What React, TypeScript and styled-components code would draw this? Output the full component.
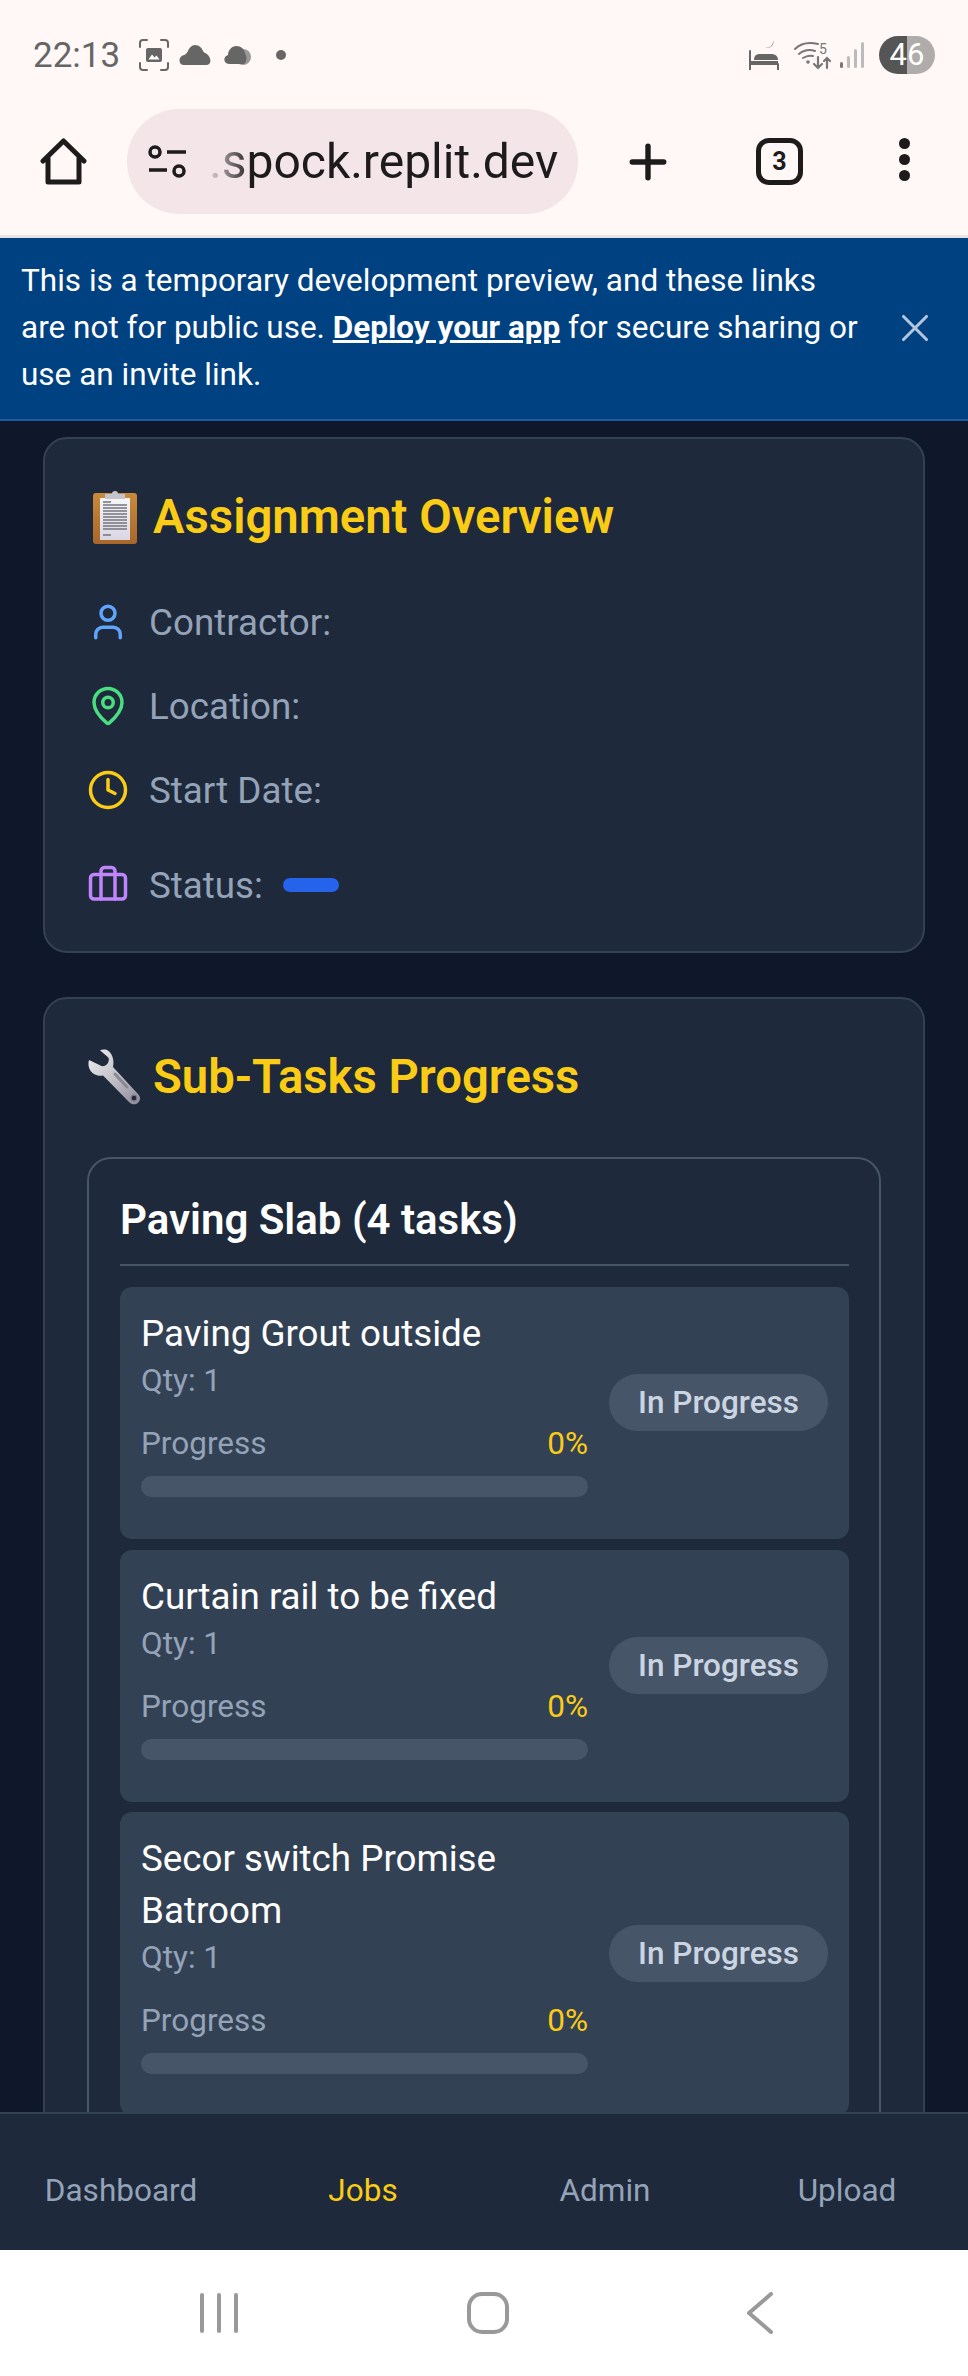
import React from 'react';
import styled, { createGlobalStyle } from 'styled-components';
import { User, MapPin, Clock, Briefcase, X, Plus } from 'lucide-react';

const Global = createGlobalStyle`
  html, body { margin: 0; padding: 0; background: #fff; }
  body { font-family: Roboto, "Liberation Sans", sans-serif; }
  * { box-sizing: border-box; }
`;

const Phone = styled.div`
  width: 968px;
  height: 2376px;
  display: flex;
  flex-direction: column;
  overflow: hidden;
`;

const StatusBar = styled.div`
  height: 92px;
  flex: none;
  background: #fff8f7;
  display: flex;
  align-items: center;
  justify-content: space-between;
  padding: 18px 33px 0 33px;
  color: #666;
`;

const StatusGroup = styled.div`
  display: flex;
  align-items: center;
`;

const Time = styled.span`
  font-size: 35px;
  margin-right: 18px;
`;

const Battery = styled.div`
  width: 56px;
  height: 38px;
  margin-left: 14px;
  border-radius: 19px;
  background: linear-gradient(90deg, #555 0 50%, #b0acab 50% 100%);
  color: #fff;
  font-size: 31px;
  line-height: 38px;
  text-align: center;
`;

const Toolbar = styled.div`
  height: 146px;
  flex: none;
  background: #fff8f7;
  border-bottom: 3px solid #e9e3e5;
  display: flex;
  align-items: flex-start;
  padding: 17px 0 0 40px;
  color: #1d1b1c;
`;

const HomeButton = styled.div`
  width: 47px;
  height: 47px;
  margin: 29px 40px 0 0;
`;

const UrlPill = styled.div`
  width: 451px;
  height: 105px;
  border-radius: 52px;
  background: #f3e5e8;
  display: flex;
  align-items: center;
  padding-left: 21px;
  flex: none;
`;

const UrlText = styled.span`
  font-size: 48px;
  margin-left: 21px;
  white-space: nowrap;
  -webkit-mask-image: linear-gradient(90deg, rgba(0,0,0,.1) 0, #000 42px);
  mask-image: linear-gradient(90deg, rgba(0,0,0,.1) 0, #000 42px);
`;

const PlusButton = styled.div`
  display: flex;
  margin: 26px 0 0 43px;
`;

const TabCount = styled.div`
  width: 47px;
  height: 47px;
  margin: 29px 0 0 81px;
  border: 5px solid #1d1b1c;
  border-radius: 13px;
  display: flex;
  align-items: center;
  justify-content: center;
  font-size: 25px;
  font-weight: 700;
`;

const MenuDots = styled.div`
  margin: 29px 0 0 96px;
  display: flex;
  flex-direction: column;
  gap: 5px;
  i {
    width: 11px;
    height: 11px;
    border-radius: 50%;
    background: #1d1b1c;
  }
`;

const Banner = styled.div`
  flex: none;
  height: 183px;
  background: #004182;
  border-bottom: 2px solid #1f5a9c;
  display: flex;
  align-items: center;
  justify-content: space-between;
  padding: 0 30px 2px 21px;
  color: #fff;
`;

const BannerText = styled.div`
  flex: 0 0 840px;
  font-size: 31.5px;
  line-height: 47px;
  a {
    color: #fff;
    font-weight: 700;
    text-decoration: underline;
    text-decoration-thickness: 3px;
  }
`;

const Main = styled.main`
  flex: 1;
  min-height: 0;
  overflow: hidden;
  background: #0f172a;
  padding: 16px 43px 0;
  display: flex;
  flex-direction: column;
  gap: 44px;
`;

const Card = styled.section`
  flex: none;
  background: #1e293b;
  border: 2px solid #334155;
  border-radius: 24px;
  padding: 42px 42px 0;
`;

const Heading = styled.h2<{ $gap: number; $indent: number }>`
  margin: 0;
  padding-left: ${(p) => p.$indent}px;
  display: flex;
  align-items: center;
  gap: ${(p) => p.$gap}px;
  color: #facc15;
  font-size: 47.25px;
  line-height: 72px;
  font-weight: 600;
`;

const InfoList = styled.div`
  padding: 27px 0 13px;
`;

const InfoRow = styled.div<{ $height: number }>`
  height: ${(p) => p.$height}px;
  display: flex;
  align-items: center;
  gap: 20px;
  color: #94a3b8;
  font-size: 36.75px;
`;

const StatusChip = styled.span`
  width: 56px;
  height: 14px;
  border-radius: 7px;
  background: #2563eb;
`;

const Group = styled.div`
  margin-top: 44px;
  border: 2px solid #475569;
  border-radius: 24px;
  padding: 34px 30px 60px 31px;
`;

const GroupTitle = styled.h3`
  margin: 0 0 21px;
  padding-bottom: 17px;
  border-bottom: 2px solid #475569;
  color: #fff;
  font-size: 42px;
  line-height: 54px;
  font-weight: 600;
`;

const TaskList = styled.div`
  display: flex;
  flex-direction: column;
  gap: 10.5px;
`;

const Task = styled.div`
  background: #334155;
  border-radius: 12px;
  padding: 21px 21px 42px;
  display: flex;
  align-items: center;
  gap: 21px;
`;

const TaskBody = styled.div`
  flex: 1;
  min-width: 0;
`;

const TaskName = styled.div`
  color: #fff;
  font-size: 36.75px;
  line-height: 52px;
`;

const Qty = styled.div`
  color: #94a3b8;
  font-size: 31.5px;
  line-height: 42px;
`;

const ProgressHead = styled.div`
  display: flex;
  justify-content: space-between;
  margin-top: 21px;
  color: #94a3b8;
  font-size: 31.5px;
  line-height: 42px;
  b {
    color: #facc15;
    font-weight: 400;
  }
`;

const Track = styled.div`
  margin-top: 11px;
  height: 21px;
  border-radius: 11px;
  background: #475569;
`;

const Badge = styled.div`
  flex: none;
  width: 219px;
  height: 57px;
  border-radius: 29px;
  background: #475569;
  color: #cbd5e1;
  font-size: 31.5px;
  font-weight: 500;
  display: flex;
  align-items: center;
  justify-content: center;
`;

const BottomNav = styled.nav`
  flex: none;
  height: 138px;
  background: #1e293b;
  border-top: 2px solid #334155;
  display: grid;
  grid-template-columns: repeat(4, 1fr);
  align-items: center;
  padding-top: 16px;
`;

const NavItem = styled.div<{ $active?: boolean }>`
  text-align: center;
  font-size: 31.5px;
  color: ${(p) => (p.$active ? '#facc15' : '#94a3b8')};
`;

const SystemNav = styled.div`
  flex: none;
  height: 126px;
  background: #fff;
  display: grid;
  grid-template-columns: 267px 279px 1fr;
  align-items: center;
  padding-left: 200px;
`;

const Clipboard = () => (
  <svg width="46" height="56" viewBox="0 0 46 56">
    <defs>
      <linearGradient id="board" x1="0" y1="0" x2="0" y2="1">
        <stop offset="0" stopColor="#c98a3c" />
        <stop offset="1" stopColor="#a8672a" />
      </linearGradient>
      <linearGradient id="sheet" x1="0" y1="0" x2="0" y2="1">
        <stop offset="0" stopColor="#f6f6f8" />
        <stop offset="1" stopColor="#d9d6e4" />
      </linearGradient>
    </defs>
    <rect x="1" y="4" width="44" height="51" rx="3" fill="url(#board)" />
    <rect x="8" y="9" width="30" height="42" fill="url(#sheet)" />
    <path d="M13 5h7a3 3 0 0 1 6 0h7v5H13z" fill="#c4c4cc" />
    <path d="M11 13h8M11 16h24M11 19h24M11 22h24M11 25h24M11 28h24M11 31h24M11 34h24M11 37h24M11 40h24M11 46h8" stroke="#74747e" strokeWidth="1.3" />
  </svg>
);

const Wrench = () => (
  <svg width="57" height="56" viewBox="0 0 57 56">
    <defs>
      <linearGradient id="steel" x1="0" y1="0" x2="1" y2="1">
        <stop offset="0" stopColor="#f0f0f2" />
        <stop offset="0.55" stopColor="#bdbcc4" />
        <stop offset="1" stopColor="#8d8a9c" />
      </linearGradient>
    </defs>
    <path d="M20 1c-2-.6-5-.6-7 .3l8 7c1.600 1.500.8 5-1 7-2 2-5 2.500-7 1L2 11c-1.500 5 0 11 5 14 3 1.800 6 2 9 1.500L42 53c3 3 6.500 3 9 .8 3-2.800 2.500-6.300 0-8.800L26 18c1.500-6.500-.5-14-6-17z" fill="url(#steel)" />
    <path d="M28 25l12 13" stroke="#8a8894" strokeWidth="3" strokeLinecap="round" />
    <circle cx="47" cy="49" r="2.800" fill="#1e293b" stroke="#77748a" strokeWidth="1.200" />
  </svg>
);

const ScreenshotIcon = () => (
  <svg width="32" height="32" viewBox="0 0 32 32" style={{ marginRight: 9 }} fill="none" stroke="#666" strokeWidth="2" strokeLinecap="round">
    <path d="M2 8V4a3 3 0 0 1 3-3h4M23 1h4a3 3 0 0 1 3 3v4M30 24v4a3 3 0 0 1-3 3h-4M9 31H5a3 3 0 0 1-3-3v-4" />
    <rect x="8" y="9" width="16" height="14" rx="2" fill="#666" stroke="none" />
    <path d="M10.500 20.500l3.500-5 2.500 3 2-2 3 4z" fill="#fff" stroke="none" />
  </svg>
);

const CloudIcon = ({ ghost }: { ghost?: boolean }) => (
  <svg width={ghost ? 28 : 33} height="20" viewBox={ghost ? '0 0 28 20' : '0 0 33 20'} style={{ marginRight: ghost ? 0 : 12 }} fill="#666">
    {ghost ? (
      <>
        <circle cx="19" cy="12" r="8" fill="#999" />
        <path d="M12 1c5 0 9 3.500 9 8 2 .5 2 9-1 10H5c-6 0-6-8-1-9 0-5 4-9 8-9z" />
      </>
    ) : (
      <path d="M16 0c4 0 7 3 8 6 1 2 3 2 5 4 3 3 4 10-2 10H5c-6 0-6-9 0-10 1 0 3-2 4-4 1-3 4-6 7-6z" />
    )}
  </svg>
);

const BedIcon = () => (
  <svg width="30" height="30" viewBox="0 0 30 30" fill="#666">
    <path d="M24 0a6 6 0 0 1-8 7.500A6.500 6.500 0 0 0 24 0z" />
    <path d="M1 11v19M29 24v6" stroke="#666" strokeWidth="2" strokeLinecap="round" />
    <path d="M5 20c0-4 2-6 6-6h11c4 0 7 2 7 6z" />
    <rect x="1" y="21" width="28" height="4" />
  </svg>
);

const WifiIcon = () => (
  <svg width="38" height="30" viewBox="0 0 38 30" fill="none" stroke="#777" strokeWidth="2" strokeLinecap="round" style={{ marginLeft: 15 }}>
    <path d="M1 9C7 3 15 2 24 4M5 14c5-4 10-5 16-3M9 18c3-2 6-3 10-2" />
    <circle cx="14" cy="22" r="1.800" fill="#777" stroke="none" />
    <text x="25" y="14" fontSize="14" fill="#777" stroke="none" fontFamily="Roboto">5</text>
    <path d="M24 17v11M20 24l4 4 4-4M33 28V18M30 21l3-3 3 3" strokeWidth="2.200" />
  </svg>
);

const SignalIcon = () => (
  <svg width="25" height="26" viewBox="0 0 25 26" style={{ marginLeft: 8 }} fill="#bbb">
    <rect x="0" y="20" width="3" height="6" rx="1.500" fill="#777" />
    <rect x="7" y="14" width="3" height="12" rx="1.500" />
    <rect x="14" y="7" width="3" height="19" rx="1.500" />
    <rect x="21" y="0" width="3" height="26" rx="1.500" />
  </svg>
);

const HomeIcon = () => (
  <svg width="47" height="47" viewBox="0 0 47 47" fill="none" stroke="#1d1b1c" strokeWidth="5" strokeLinejoin="round" strokeLinecap="round">
    <path d="M3 23L23.500 3 44 23M8 20v24h31V20" />
  </svg>
);

const TuneIcon = () => (
  <svg width="40" height="34" viewBox="0 0 40 34" fill="none" stroke="#1d1b1c" strokeWidth="3.500">
    <circle cx="7" cy="7" r="5" />
    <circle cx="31" cy="26" r="5" />
    <path d="M19 7h19M1 25h18" />
  </svg>
);

const SystemBack = () => (
  <svg width="28" height="42" viewBox="0 0 28 42" fill="none" stroke="#999" strokeWidth="4" strokeLinecap="round" strokeLinejoin="round">
    <path d="M25 2L3 21l22 19" />
  </svg>
);

const SystemHome = () => (
  <svg width="42" height="42" viewBox="0 0 42 42" fill="none" stroke="#999" strokeWidth="4">
    <rect x="2" y="2" width="38" height="38" rx="13" />
  </svg>
);

const SystemRecents = () => (
  <svg width="38" height="40" viewBox="0 0 38 40" fill="none" stroke="#999" strokeWidth="4" strokeLinecap="round">
    <path d="M2 2v36M19 2v36M36 2v36" />
  </svg>
);

const tasks = ['Paving Grout outside', 'Curtain rail to be fixed', 'Secor switch Promise Batroom'];

export default function App() {
  return (
    <Phone>
      <Global />
      <StatusBar>
        <StatusGroup>
          <Time>22:13</Time>
          <ScreenshotIcon />
          <CloudIcon />
          <CloudIcon ghost />
          <svg width="10" height="10" style={{ marginLeft: 24 }}><circle cx="5" cy="5" r="5" fill="#666" /></svg>
        </StatusGroup>
        <StatusGroup>
          <BedIcon />
          <WifiIcon />
          <SignalIcon />
          <Battery>46</Battery>
        </StatusGroup>
      </StatusBar>
      <Toolbar>
        <HomeButton><HomeIcon /></HomeButton>
        <UrlPill>
          <TuneIcon />
          <UrlText>.spock.replit.dev</UrlText>
        </UrlPill>
        <PlusButton><Plus size={54} strokeWidth={2.4} /></PlusButton>
        <TabCount>3</TabCount>
        <MenuDots><i /><i /><i /></MenuDots>
      </Toolbar>
      <Banner>
        <BannerText>
          This is a temporary development preview, and these links are not for public use. <a>Deploy your app</a> for secure sharing or use an invite link.
        </BannerText>
        <X size={46} color="#b3c6de" strokeWidth={1.6} />
      </Banner>
      <Main>
        <Card>
          <Heading $gap={15} $indent={5}><Clipboard />Assignment Overview</Heading>
          <InfoList>
            <InfoRow $height={84}><User size={42} color="#60a5fa" />Contractor:</InfoRow>
            <InfoRow $height={84}><MapPin size={42} color="#4ade80" />Location:</InfoRow>
            <InfoRow $height={84}><Clock size={42} color="#facc15" />Start Date:</InfoRow>
            <InfoRow $height={106}><Briefcase size={42} color="#c084fc" />Status:<StatusChip /></InfoRow>
          </InfoList>
        </Card>
        <Card>
          <Heading $gap={9} $indent={0}><Wrench />Sub-Tasks Progress</Heading>
          <Group>
            <GroupTitle>Paving Slab (4 tasks)</GroupTitle>
            <TaskList>
              {tasks.map((name) => (
                <Task key={name}>
                  <TaskBody>
                    <TaskName>{name}</TaskName>
                    <Qty>Qty: 1</Qty>
                    <ProgressHead>Progress<b>0%</b></ProgressHead>
                    <Track />
                  </TaskBody>
                  <Badge>In Progress</Badge>
                </Task>
              ))}
            </TaskList>
          </Group>
        </Card>
      </Main>
      <BottomNav>
        <NavItem>Dashboard</NavItem>
        <NavItem $active>Jobs</NavItem>
        <NavItem>Admin</NavItem>
        <NavItem>Upload</NavItem>
      </BottomNav>
      <SystemNav>
        <SystemRecents />
        <SystemHome />
        <SystemBack />
      </SystemNav>
    </Phone>
  );
}
